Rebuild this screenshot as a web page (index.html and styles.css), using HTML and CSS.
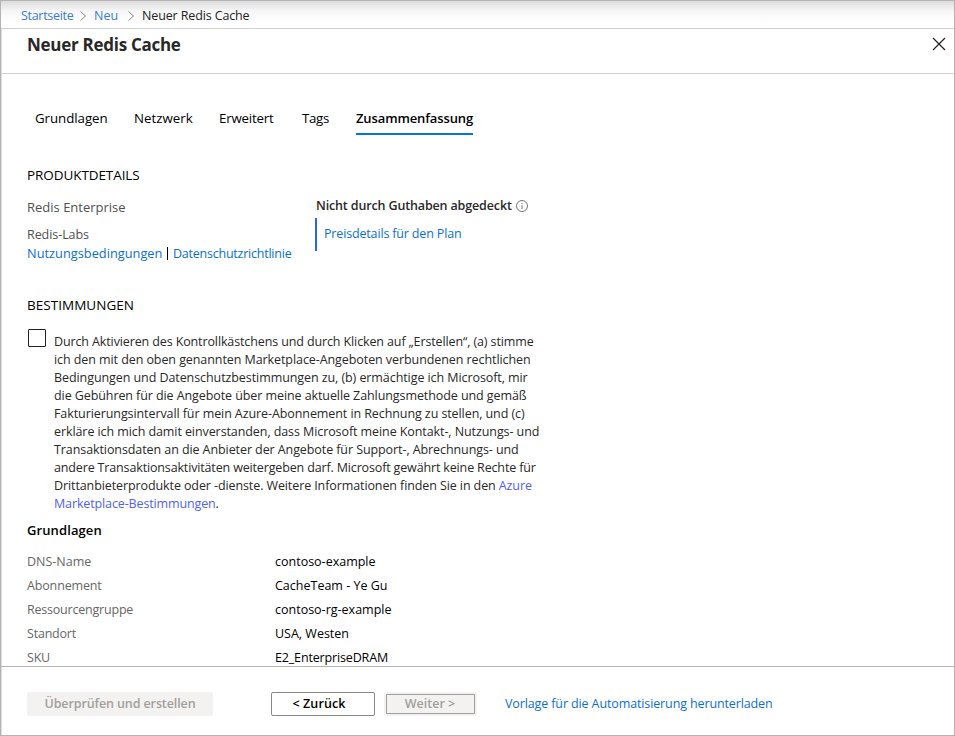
FILE: index.html
```html
<!DOCTYPE html>
<html lang="de">
<head>
<meta charset="utf-8">
<title>Neuer Redis Cache</title>
<link rel="stylesheet" href="styles.css">
</head>
<body>
<div class="window">
  <nav class="breadcrumb">
    <a class="b1">Startseite</a>
    <svg class="chevron c1" viewBox="0 0 8 12"><path d="M1.5 1.5 6.5 6 1.5 10.5"/></svg>
    <a class="b2">Neu</a>
    <svg class="chevron c2" viewBox="0 0 8 12"><path d="M1.5 1.5 6.5 6 1.5 10.5"/></svg>
    <span class="b3">Neuer Redis Cache</span>
  </nav>
  <header class="titlebar">
    <h1>Neuer Redis Cache</h1>
    <svg class="close" viewBox="0 0 14 14"><path d="M1 1 13 13M13 1 1 13"/></svg>
  </header>
  <main class="content">
    <div class="tabs">
      <span class="tab t1">Grundlagen</span>
      <span class="tab t2">Netzwerk</span>
      <span class="tab t3">Erweitert</span>
      <span class="tab t4">Tags</span>
      <span class="tab active">Zusammenfassung</span>
    </div>
    <h2>PRODUKTDETAILS</h2>
    <section class="product">
      <div class="offer">
        <p class="name">Redis Enterprise</p>
        <p class="vendor">Redis-Labs</p>
        <p class="links"><a class="use">Nutzungsbedingungen</a><i></i><a class="privacy">Datenschutzrichtlinie</a></p>
      </div>
      <div class="credit">
        <p class="credit-title"><b>Nicht durch Guthaben abgedeckt</b><svg class="info" viewBox="0 0 12 12"><circle cx="6" cy="6" r="5.5"/><path d="M6 5.2V9M6 3v1.2"/></svg></p>
        <p class="price"><a>Preisdetails für den Plan</a></p>
      </div>
    </section>
    <h2 class="terms-title">BESTIMMUNGEN</h2>
    <section class="terms">
      <span class="checkbox"></span>
      <p>
        <span class="line">Durch Aktivieren des Kontrollkästchens und durch Klicken auf „Erstellen“, (a) stimme</span>
        <span class="line">ich den mit den oben genannten Marketplace-Angeboten verbundenen rechtlichen</span>
        <span class="line">Bedingungen und Datenschutzbestimmungen zu, (b) ermächtige ich Microsoft, mir</span>
        <span class="line">die Gebühren für die Angebote über meine aktuelle Zahlungsmethode und gemäß</span>
        <span class="line">Fakturierungsintervall für mein Azure-Abonnement in Rechnung zu stellen, und (c)</span>
        <span class="line">erkläre ich mich damit einverstanden, dass Microsoft meine Kontakt-, Nutzungs- und</span>
        <span class="line">Transaktionsdaten an die Anbieter der Angebote für Support-, Abrechnungs- und</span>
        <span class="line">andere Transaktionsaktivitäten weitergeben darf. Microsoft gewährt keine Rechte für</span>
        <span class="line">Drittanbieterprodukte oder -dienste. Weitere Informationen finden Sie in den <a>Azure</a></span>
        <span class="line"><a>Marketplace-Bestimmungen</a>.</span>
      </p>
    </section>
    <h3>Grundlagen</h3>
    <dl>
      <dt>DNS-Name</dt><dd>contoso-example</dd>
      <dt class="tight">Abonnement</dt><dd>CacheTeam - Ye Gu</dd>
      <dt class="tighter">Ressourcengruppe</dt><dd>contoso-rg-example</dd>
      <dt class="tighter">Standort</dt><dd>USA, Westen</dd>
      <dt class="tighter">SKU</dt><dd class="tight">E2_EnterpriseDRAM</dd>
    </dl>
  </main>
  <footer>
    <span class="button primary"><b>Überprüfen und erstellen</b></span>
    <span class="button back"><b>&lt; Zurück</b></span>
    <span class="button next"><b>Weiter &gt;</b></span>
    <a class="template">Vorlage für die Automatisierung herunterladen</a>
  </footer>
</div>
</body>
</html>
```
FILE: styles.css
```css
* { box-sizing: border-box; }
body { margin: 0; font: 12.5px/18px "Open Sans", "Noto Sans", sans-serif; color: #000; }
h1, h2, h3, p, dl, dd { margin: 0; font-weight: 400; }
b { font-weight: 600; }
a { color: #0b6fcf; }

.window { width: 955px; height: 736px; display: flex; flex-direction: column; border: 1px solid #b3b3b3; background: #fff; overflow: hidden; box-shadow: inset 1px 0 #dcdcdc; white-space: nowrap; }

.breadcrumb { flex: none; height: 28px; border-bottom: 1px solid #d0d0d0; display: flex; align-items: center; padding: 2px 0 0 20px; background: linear-gradient(#dcdcdc, #f6f6f6 10px, #fff 22px); color: #222; }
.breadcrumb a { color: #3b7bd0; }
.b1 { width: 53px; letter-spacing: -0.3px; }
.b2 { width: 24px; }
.b3 { letter-spacing: -0.13px; }
.chevron { width: 8px; height: 12px; fill: none; stroke: #888; flex: none; }
.c1 { margin: 0 7px 0 5px; }
.c2 { margin: 0 7px 0 9px; }

.titlebar { flex: none; height: 45px; border-bottom: 1px solid #d0d0d0; display: flex; justify-content: space-between; padding: 6px 8px 0 26px; }
h1 { font-size: 17px; line-height: 20px; font-weight: 700; color: #292827; letter-spacing: -0.28px; }
.close { width: 14px; height: 14px; margin-top: 2px; fill: none; stroke: #222; stroke-width: 1.2; }

.content { flex: 1; padding: 35px 0 0 26px; overflow: hidden; min-height: 0; }
.tabs { display: flex; padding-left: 8px; font-size: 13.3px; height: 26px; }
.t1 { width: 99px; letter-spacing: -0.05px; }
.t2 { width: 85px; }
.t3 { width: 83px; letter-spacing: -0.2px; }
.t4 { width: 54px; letter-spacing: -0.35px; }
.active { font-weight: 600; font-size: 13px; letter-spacing: -0.12px; width: 117px; border-bottom: 2px solid #0078d4; }

h2 { font-size: 13.5px; margin-top: 31px; letter-spacing: -0.08px; }
.product { display: flex; margin-top: 12px; color: #505050; }
.offer { width: 288px; }
.name { font-size: 13px; margin-top: 2px; }
.vendor { margin-top: 10px; letter-spacing: -0.06px; }
.links { display: flex; align-items: flex-start; }
.links i { width: 1px; height: 13px; background: #000; margin: 3px 5px 0 4px; }
.use { width: 136px; font-size: 12.75px; letter-spacing: 0.03px; }
.privacy { letter-spacing: -0.23px; margin-top: 1px; }
.credit-title { color: #292827; display: flex; align-items: center; padding: 1px 0 0 1px; letter-spacing: -0.14px; }
.info { width: 12px; height: 12px; fill: none; stroke: #666; stroke-width: 0.9; margin: -1px 0 0 4px; }
.price { border-left: 2px solid #2962ff; padding: 7px 7px 0; height: 33px; margin-top: 3px; letter-spacing: -0.16px; }

.terms-title { margin-top: 33px; letter-spacing: 0.03px; }
.terms { display: flex; margin-top: 15px; color: #292827; }
.terms p { padding-top: 4px; }
.terms a { color: #4f5ff0; }
.checkbox { flex: none; width: 18px; height: 18px; border: 1px solid #222; border-radius: 1px; margin: 0 8px 0 1px; }
.line { display: block; letter-spacing: -0.085px; }
.line:nth-child(1) { letter-spacing: -0.12px; }
.line:nth-child(2), .line:nth-child(3) { letter-spacing: -0.077px; }
.line:nth-child(8) { letter-spacing: -0.15px; }
.line:nth-child(9) { letter-spacing: -0.1px; }
.line:nth-child(10) { letter-spacing: -0.13px; }

h3 { font-size: 13px; font-weight: 600; margin-top: 8px; letter-spacing: 0.1px; }
dl { display: grid; grid-template-columns: 248px 1fr; line-height: 24px; margin-top: 11px; }
dt { color: #666; }
.tight { letter-spacing: -0.15px; }
.tighter { letter-spacing: -0.21px; }

footer { flex: none; height: 69px; border-top: 1px solid #b3b3b3; display: flex; padding: 25px 0 0 26px; }
.button { height: 24px; display: flex; align-items: center; justify-content: center; border-radius: 2px; }
.primary { width: 186px; background: #f3f2f1; color: #a19f9d; letter-spacing: -0.106px; }
.back { width: 104px; margin-left: 58px; border: 1px solid #8a8886; padding-right: 8px; letter-spacing: 0.1px; }
.next { width: 93px; margin-left: 9px; background: #f3f2f1; color: #a19f9d; position: relative; padding-right: 1px; }
.next::after { content: ""; position: absolute; inset: 2px; border: 1px solid #a19f9d; }
.template { margin: 3px 0 0 28px; letter-spacing: -0.12px; }
```
